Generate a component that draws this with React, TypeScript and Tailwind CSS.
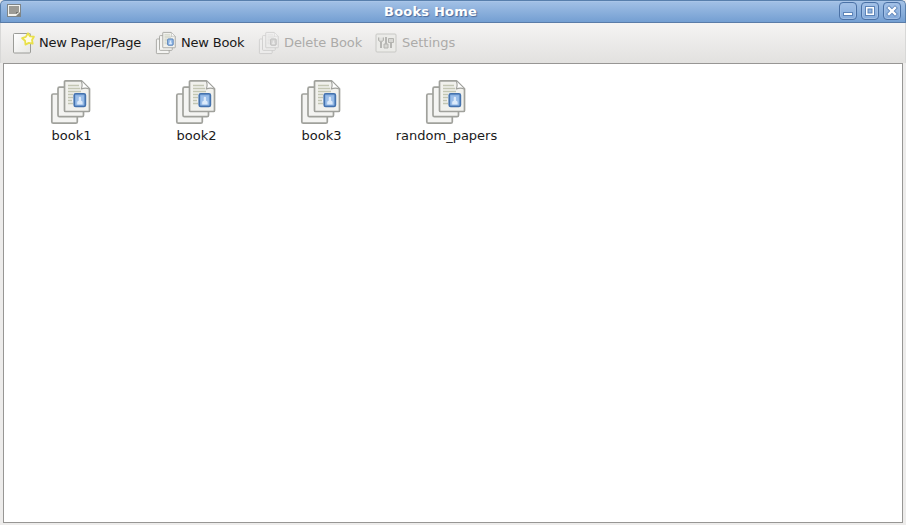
type IconProps = { className?: string };

function BookIcon({ className = '' }: IconProps) {
  return (
    <svg viewBox="0 0 42 48" className={className} fill="none">
      <g stroke="#a0a19c" strokeWidth="1.7" strokeLinejoin="round">
        <rect x="1.8" y="16" width="25.5" height="29.2" rx="1.500" fill="#f4f4f2" />
        <rect x="8" y="9.2" width="25.5" height="29.5" rx="1.500" fill="#f4f4f2" />
        <path d="M15.5 2.8H31.500L39.5 10.800V32.500a1 1 0 0 1-1 1H15.5a1 1 0 0 1-1-1V3.8a1 1 0 0 1 1-1Z" fill="#f1f1ed" />
        <path d="M31.200 3C32.500 5.500 32.200 8.500 31.300 11c2.400-1 5.800-1 8 0" fill="#fff" strokeWidth="1.1" />
      </g>
      <path d="M18 7.500h11M18 10.500h12M18 13.500h13M18 16.500h5M18 19.500h5M18 22.500h4M18 25.500h5" stroke="#c3c6b3" strokeWidth="1.3" />
      <rect x="24.200" y="15.800" width="11.200" height="12.700" rx="1.500" fill="#7fa9dc" stroke="#4472ae" strokeWidth="1.600" />
      <rect x="25.800" y="17.400" width="8" height="9.500" fill="#9abde8" />
      <path d="M27.200 26.500v-2.200q0-1.500 1.500-1.500v-2.800q0-1.200 1.200-1.200t1.200 1.200v2.800q1.500 0 1.500 1.500v2.200Z" fill="#dceafa" />
    </svg>
  );
}

function NewPageIcon() {
  return (
    <svg width="24" height="24" viewBox="0 0 24 24" fill="none">
      <defs>
        <linearGradient id="page" x1="0" y1="0" x2="1" y2="1">
          <stop offset="0" stopColor="#fff" />
          <stop offset="1" stopColor="#e6e6e4" />
        </linearGradient>
      </defs>
      <rect x="1.500" y="2.500" width="17" height="19.500" rx="1" fill="url(#page)" stroke="#9b9c98" />
      <path d="m16 2.300 1.900 3 4 .4-1.900 3.300.7 3.700-3.900-.8-3.300 1.700-.4-3.800-3-2.600 3.700-1.300Z" fill="#fffce5" stroke="#e9e04a" strokeWidth="1.800" strokeLinejoin="round" />
    </svg>
  );
}

function SettingsIcon() {
  return (
    <svg width="22" height="20" viewBox="0 0 22 20" fill="none">
      <rect x="1" y="1" width="20" height="18" rx="1" fill="#ebebe8" stroke="#c8c8c5" />
      <path d="M6 9v6M11 4v7M16 9v6" stroke="#b6b6b3" strokeWidth="2" />
      <path d="M3.500 4.500v3q2.500 3 5 0v-3M13.500 5.500h5v4h-5ZM9 11h4v4H9Z" fill="#d7d7d4" stroke="#b4b4b0" />
      <path d="M6 4v3" stroke="#ededeb" />
    </svg>
  );
}

function WindowIcon() {
  return (
    <svg width="15" height="14" viewBox="0 0 15 14">
      <rect x=".5" y=".5" width="13" height="12" fill="#f2f2ed" stroke="#7e8588" />
      <path d="M2 2h10v6L9 10H2Z" fill="#9c9b95" />
      <path d="M9 10V8h3Z" fill="#73736e" />
      <path d="m13 8-4 4h4Z" fill="#85867f" />
    </svg>
  );
}

function WindowButton({ kind }: { kind: 'minimize' | 'maximize' | 'close' }) {
  return (
    <div className="h-[18px] w-[18px] rounded-[4px] border border-[#4a71a6] bg-linear-to-b from-[#a3c1e7] to-[#83aadb] shadow-[inset_0_0_0_1px_#a0bee4]">
      <svg width="16" height="16" viewBox="0 0 16 16" fill="none">
        {kind === 'minimize' && <rect x="3.500" y="9.500" width="9" height="3" fill="#fff" stroke="#5d84b8" />}
        {kind === 'maximize' && (
          <>
            <rect x="3.500" y="3.500" width="9" height="9" fill="#fff" stroke="#5d84b8" />
            <rect x="6" y="6" width="4" height="4" fill="#91b3df" stroke="#5d84b8" />
          </>
        )}
        {kind === 'close' && (
          <>
            <path d="m5 5 6 6m0-6-6 6" stroke="#5d84b8" strokeWidth="4" strokeLinecap="square" />
            <path d="m5 5 6 6m0-6-6 6" stroke="#fff" strokeWidth="2.400" strokeLinecap="square" />
          </>
        )}
      </svg>
    </div>
  );
}

const books = ['book1', 'book2', 'book3', 'random_papers'];

export default function App() {
  return (
    <div className="flex h-[525px] w-[906px] flex-col overflow-hidden bg-[#edeceb] font-['DejaVu_Sans',sans-serif] text-[13px] text-[#1a1a1a]">
      <header className="flex h-[23px] shrink-0 items-start rounded-t-[5px] border border-t-[#587fac] border-r-[#587fac] border-b-[#5a7ca8] border-l-[#587fac] bg-linear-to-b from-[#a3c1e6] to-[#749fd2] pt-px pr-[4px] pl-[6px] shadow-[inset_0_1px_0_#a9c5e8]">
        <div className="pt-[2px]">
          <WindowIcon />
        </div>
        <h1 className="flex-1 text-center text-[13px] leading-[19px] font-bold tracking-[0.2px] text-white [text-shadow:1px_1px_1px_#49699a]">Books Home</h1>
        <div className="flex gap-[4px]">
          <WindowButton kind="minimize" />
          <WindowButton kind="maximize" />
          <WindowButton kind="close" />
        </div>
      </header>
      <nav className="flex h-[40px] shrink-0 items-center border-x border-x-[#d8d8d7] bg-linear-to-b from-[#f5f4f3] to-[#e2e1df] pl-[11px] leading-[20px]">
        <div className="flex w-[143px] items-center gap-[3px]">
          <NewPageIcon />
          <span className="tracking-[-0.22px]">New Paper/Page</span>
        </div>
        <div className="flex w-[103px] items-center gap-[4px]">
          <BookIcon className="h-[24px] w-[22px]" />
          <span className="tracking-[-0.2px]">New Book</span>
        </div>
        <div className="flex w-[117px] items-center gap-[4px] text-[#acaba9]">
          <BookIcon className="h-[24px] w-[22px] opacity-40 grayscale" />
          <span className="tracking-[-0.1px]">Delete Book</span>
        </div>
        <div className="flex items-center gap-[5px] text-[#acaba9]">
          <SettingsIcon />
          <span>Settings</span>
        </div>
      </nav>
      <main className="mr-[3px] mb-[2px] ml-[3px] flex flex-1 items-start border border-[#979694] bg-white pt-[14px] pl-[4px]">
        {books.map((name) => (
          <div key={name} className="flex w-[125px] flex-col items-center">
            <BookIcon className="h-[48px] w-[42px]" />
            <span className="pt-px pl-[2px] leading-[18px]">{name}</span>
          </div>
        ))}
      </main>
    </div>
  );
}
